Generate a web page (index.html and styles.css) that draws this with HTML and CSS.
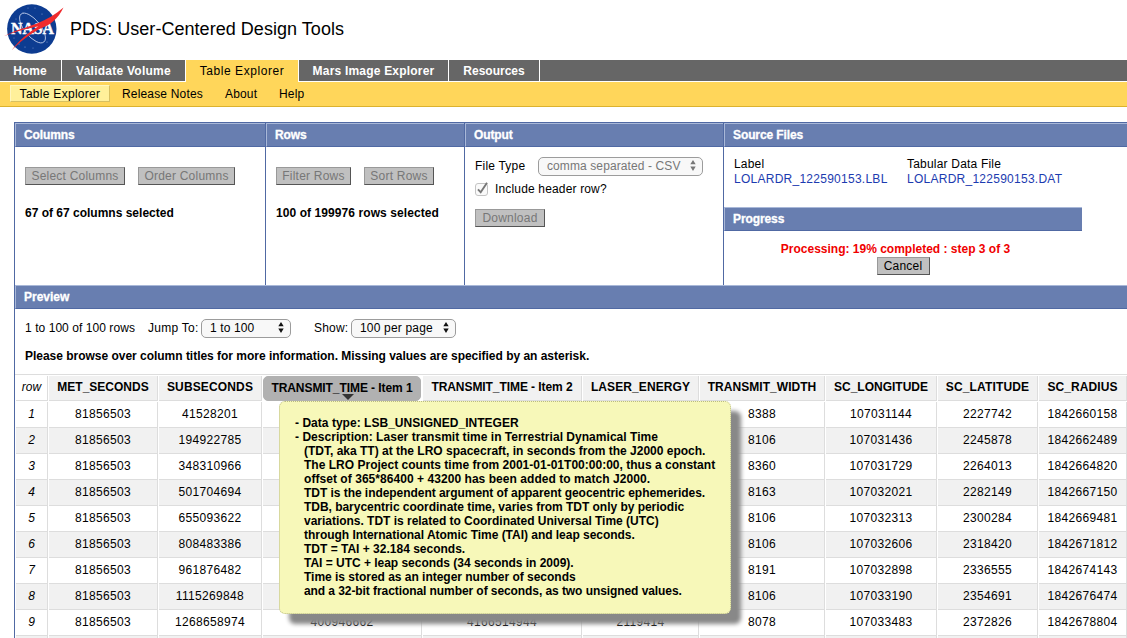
FILE: index.html
```html
<!DOCTYPE html>
<html lang="en">
<head>
<meta charset="utf-8">
<title>PDS: User-Centered Design Tools</title>
<link rel="stylesheet" href="styles.css">
</head>
<body>
<header class="masthead">
  <svg class="logo" width="70" height="60" viewBox="0 0 70 60">
    <circle cx="31.8" cy="29" r="24.7" fill="#0d3c91"/>
    <g fill="#7f9bd0"><circle cx="23" cy="13" r=".6"/><circle cx="35" cy="8" r=".5"/><circle cx="42" cy="14" r=".6"/><circle cx="16" cy="19" r=".5"/><circle cx="19" cy="44" r=".6"/><circle cx="25" cy="47" r=".6"/><circle cx="33" cy="48" r=".5"/><circle cx="47" cy="42" r=".6"/><circle cx="14" cy="38" r=".5"/><circle cx="28" cy="8" r=".5"/></g>
    <ellipse cx="32.5" cy="28" rx="18" ry="8" transform="rotate(51 32.5 28)" fill="none" stroke="#c9d5ef" stroke-width=".8"/>
    <text class="logo-text" x="11" y="34" textLength="43" lengthAdjust="spacingAndGlyphs">NASA</text>
    <path d="M63.500 7.500C58 19 50 25 41.500 28C29 34.500 20 42 11.500 50.500C19 40 29 32 38.500 26.200C27 28.500 14 32 4 36.300C13 31 25 28 37 23.500C47 19.500 55 14.500 63.500 7.500Z" fill="#ef2b2d"/>
  </svg>
  <h1 class="title">PDS: User-Centered Design Tools</h1>
</header>
<nav class="tabs">
  <a class="tab tab-home">Home</a>
  <a class="tab tab-validate">Validate Volume</a>
  <a class="tab tab-active">Table Explorer</a>
  <a class="tab tab-mars">Mars Image Explorer</a>
  <a class="tab tab-resources">Resources</a>
</nav>
<nav class="subnav">
  <a class="sub sub-active">Table Explorer</a>
  <a class="sub sub-notes">Release Notes</a>
  <a class="sub sub-about">About</a>
  <a class="sub">Help</a>
</nav>
<main class="workspace">
  <div class="panels">
    <section class="panel">
      <h2 class="bar">Columns</h2>
      <div class="actions"><button class="btn w100" disabled>Select Columns</button><button class="btn w97" disabled>Order Columns</button></div>
      <p class="status status-cols">67 of 67 columns selected</p>
    </section>
    <section class="panel">
      <h2 class="bar">Rows</h2>
      <div class="actions"><button class="btn w75" disabled>Filter Rows</button><button class="btn w70" disabled>Sort Rows</button></div>
      <p class="status status-rows">100 of 199976 rows selected</p>
    </section>
    <section class="panel">
      <h2 class="bar">Output</h2>
      <div class="filetype"><span class="ft-label">File Type</span>
        <span class="select select-off"><span class="csv">comma separated - CSV</span><svg width="6" height="11" viewBox="0 0 6 11"><path d="M3 0L5.700 4.300H.3ZM3 11L.3 6.500H5.700Z" fill="#777"/></svg></span></div>
      <div class="include">
        <svg width="14" height="14" viewBox="0 0 14 14"><rect x=".5" y="1.500" width="12" height="12" rx="2.500" fill="#fafafa" stroke="#c4c4c4"/><path d="M3 7.300L5.700 10.300L12 .8" fill="none" stroke="#777" stroke-width="1.900"/></svg>
        <span>Include header row?</span></div>
      <button class="btn btn-download" disabled>Download</button>
    </section>
    <section class="panel">
      <h2 class="bar bar-src">Source Files</h2>
      <div class="files">
        <div class="file"><span>Label</span><a class="link">LOLARDR_122590153.LBL</a></div>
        <div class="file"><span class="tdf">Tabular Data File</span><a class="link">LOLARDR_122590153.DAT</a></div>
      </div>
      <div class="progress">
        <h2 class="bar bar-progress">Progress</h2>
        <p class="processing">Processing: 19% completed : step 3 of 3</p>
        <button class="btn btn-cancel">Cancel</button>
      </div>
    </section>
  </div>
  <h2 class="bar bar-preview">Preview</h2>
  <div class="pager">
    <span class="pg-count">1 to 100 of 100 rows</span>
    <span class="pg-jump">Jump To:</span>
    <span class="select select-jump"><span>1 to 100</span><svg width="6" height="11" viewBox="0 0 6 11"><path d="M3 0L5.700 4.300H.3ZM3 11L.3 6.500H5.700Z" fill="#111"/></svg></span>
    <span class="pg-show">Show:</span>
    <span class="select select-show"><span>100 per page</span><svg width="6" height="11" viewBox="0 0 6 11"><path d="M3 0L5.700 4.300H.3ZM3 11L.3 6.500H5.700Z" fill="#111"/></svg></span>
  </div>
  <p class="hint">Please browse over column titles for more information. Missing values are specified by an asterisk.</p>
  <div class="grid">
    <div class="row head"><i class="first">row</i><b class="h-met">MET_SECONDS</b><b class="h-sub">SUBSECONDS</b>
      <b class="hovered h-t1"><span>TRANSMIT_TIME - Item 1</span><svg class="caret" width="12" height="6" viewBox="0 0 12 6"><path d="M0 0H12L6 6Z" fill="#333"/></svg>
      </b><b class="h-t2">TRANSMIT_TIME - Item 2</b><b class="h-las">LASER_ENERGY</b><b class="h-wid">TRANSMIT_WIDTH</b><b class="h-lon">SC_LONGITUDE</b><b class="h-lat">SC_LATITUDE</b><b class="h-rad">SC_RADIUS</b></div>
    <div class="row"><i>1</i><span>81856503</span><span>41528201</span><span></span><span></span><span></span><span>8388</span><span>107031144</span><span>2227742</span><span>1842660158</span></div>
    <div class="row alt"><i>2</i><span>81856503</span><span>194922785</span><span></span><span></span><span></span><span>8106</span><span>107031436</span><span>2245878</span><span>1842662489</span></div>
    <div class="row"><i>3</i><span>81856503</span><span>348310966</span><span></span><span></span><span></span><span>8360</span><span>107031729</span><span>2264013</span><span>1842664820</span></div>
    <div class="row alt"><i>4</i><span>81856503</span><span>501704694</span><span></span><span></span><span></span><span>8163</span><span>107032021</span><span>2282149</span><span>1842667150</span></div>
    <div class="row"><i>5</i><span>81856503</span><span>655093622</span><span></span><span></span><span></span><span>8106</span><span>107032313</span><span>2300284</span><span>1842669481</span></div>
    <div class="row alt"><i>6</i><span>81856503</span><span>808483386</span><span></span><span></span><span></span><span>8106</span><span>107032606</span><span>2318420</span><span>1842671812</span></div>
    <div class="row"><i>7</i><span>81856503</span><span>961876482</span><span></span><span></span><span></span><span>8191</span><span>107032898</span><span>2336555</span><span>1842674143</span></div>
    <div class="row alt"><i>8</i><span>81856503</span><span>1115269848</span><span></span><span></span><span></span><span>8106</span><span>107033190</span><span>2354691</span><span>1842676474</span></div>
    <div class="row"><i>9</i><span>81856503</span><span>1268658974</span><span>400946662</span><span>4166514944</span><span>2119414</span><span>8078</span><span>107033483</span><span>2372826</span><span>1842678804</span></div>
    <div class="row alt"><i></i><span></span><span></span><span></span><span></span><span></span><span></span><span></span><span></span><span></span></div>
  </div>
</main>
<div class="tooltip">
  <div class="tl out s1">- Data type: LSB_UNSIGNED_INTEGER</div>
  <div class="tl out s2">- Description: Laser transmit time in Terrestrial Dynamical Time</div>
  <div class="tl">(TDT, aka TT) at the LRO spacecraft, in seconds from the J2000 epoch.</div>
  <div class="tl s4">The LRO Project counts time from 2001-01-01T00:00:00, thus a constant</div>
  <div class="tl s5">offset of 365*86400 + 43200 has been added to match J2000.</div>
  <div class="tl s6">TDT is the independent argument of apparent geocentric ephemerides.</div>
  <div class="tl s7">TDB, barycentric coordinate time, varies from TDT only by periodic</div>
  <div class="tl s8">variations. TDT is related to Coordinated Universal Time (UTC)</div>
  <div class="tl s9">through International Atomic Time (TAI) and leap seconds.</div>
  <div class="tl">TDT = TAI + 32.184 seconds.</div>
  <div class="tl s11">TAI = UTC + leap seconds (34 seconds in 2009).</div>
  <div class="tl s12">Time is stored as an integer number of seconds</div>
  <div class="tl s13">and a 32-bit fractional number of seconds, as two unsigned values.</div>
</div>
</body>
</html>
```
FILE: styles.css
```css
* { box-sizing: border-box; }
body { margin: 0; width: 1127px; height: 638px; overflow: hidden; position: relative; background: #fff; color: #000; font: 12px/14px "Liberation Sans", Arial, sans-serif; }
h1, h2, p { margin: 0; }
.masthead { display: flex; height: 60px; }
.logo { flex: none; }
.logo-text { font: bold 16.5px "Liberation Serif", serif; fill: #fff; stroke: #fff; stroke-width: .4px; }
.title { font-size: 18px; font-weight: normal; line-height: 58px; white-space: nowrap; letter-spacing: .04px; }

.tabs { display: flex; height: 22px; background: #666; border-bottom: 1px solid #fff; }
.tab { height: 21px; line-height: 22px; text-align: center; color: #fff; font-weight: bold; border-right: 1px solid #fff; white-space: nowrap; }
.tab-home { width: 62px; padding-right: 1px; }
.tab-validate { width: 124px; letter-spacing: .25px; }
.tab-active { width: 113px; height: 22px; background: #ffd65a; color: #000; font-weight: normal; letter-spacing: .57px; border-right-color: #fff; }
.tab-mars { width: 150px; letter-spacing: .2px; }
.tab-resources { width: 91px; }
.subnav { display: flex; align-items: flex-start; height: 25px; padding: 3px 0 0 10px; background: #ffd65a; border-bottom: 1px solid #dcb22e; white-space: nowrap; letter-spacing: .17px; }
.sub { line-height: 19px; }
.sub-active { width: 100px; height: 17px; line-height: 16px; text-align: center; background: #fff09a; border: 1px solid #fff6c0; border-right-color: #d8c060; border-bottom-color: #d8c060; margin-right: 12px; letter-spacing: .29px; }
.sub-notes { width: 103px; }
.sub-about { width: 54px; }

.workspace { margin: 15px 0 0 14px; border: 1px solid #5069a3; border-right: 0; border-bottom: 0; }
.panels { display: grid; grid-template-columns: 250px 199px 259px 1fr; height: 162px; }
.panel + .panel { border-left: 1px solid #5069a3; }
.bar { height: 24px; line-height: 22px; padding-left: 8px; background: #687eb0; color: #fff; font-size: 12px; border-top: 1px solid #a9b8d8; border-left: 1px solid #a9b8d8; border-bottom: 1px solid #5069a3; -webkit-text-stroke: .3px #fff; }
.panels .bar { letter-spacing: -.1px; }
.btn { height: 18px; padding: 0; background: #c0c0c0; border: 1px solid; border-color: #999 #555 #555 #999; color: #777; font: 12px/15px "Liberation Sans", Arial, sans-serif; letter-spacing: .22px; white-space: nowrap; }
.actions { display: flex; gap: 13px; padding: 20px 0 0 10px; }
.w100 { width: 100px; } .w97 { width: 97px; } .w75 { width: 75px; } .w70 { width: 70px; }
.status { padding: 21px 0 0 10px; font-weight: bold; white-space: nowrap; }
.status-rows { letter-spacing: .08px; }
.filetype { display: flex; align-items: center; height: 20px; margin: 9px 0 0 10px; white-space: nowrap; letter-spacing: .2px; }
.ft-label { width: 63px; }
.select { display: flex; align-items: center; justify-content: space-between; height: 19px; padding: 0 6px 1px 8px; border: 1px solid #9c9c9c; border-radius: 5px; background: #f8f8f8; white-space: nowrap; }
.select-off { width: 165px; color: #777; letter-spacing: .1px; }
.include { display: flex; align-items: center; gap: 6px; height: 16px; margin: 5px 0 0 10px; letter-spacing: .16px; }
.btn-download { width: 70px; margin: 12px 0 0 10px; display: block; }
.files { display: flex; gap: 20px; height: 60px; padding: 10px 0 0 10px; white-space: nowrap; letter-spacing: .2px; }
.file { width: 153px; display: flex; flex-direction: column; line-height: 15px; }
.link { color: #1c3bb0; letter-spacing: .26px; }
.progress { width: 358px; display: flex; flex-direction: column; align-items: center; }
.bar-progress { width: 358px; }
.processing { margin: 11px 0 1px; padding-right: 15px; color: #f00000; font-weight: bold; white-space: nowrap; }
.btn-cancel { width: 53px; color: #000; }

.pager { display: flex; align-items: center; height: 19px; margin: 9.5px 0 0 10px; white-space: nowrap; letter-spacing: .06px; }
.pg-count { width: 123px; }
.pg-jump { width: 53px; letter-spacing: .25px; }
.select-jump { width: 90px; letter-spacing: .12px; }
.pg-show { width: 37px; margin-left: 23px; letter-spacing: .2px; }
.select-show { width: 105px; letter-spacing: .18px; }
.hint { padding: 11.5px 0 0 10px; height: 36px; font-weight: bold; white-space: nowrap; letter-spacing: -.02px; }

.grid { border-top: 1px solid #ddd; }
.row { display: grid; grid-template-columns: 33px 110px 104px 160px 160px 117px 126px 112px 101px 89px; height: 26px; }
.row > * { margin: 1px 0 0 1px; border-right: 1px solid #ddd; border-bottom: 1px solid #ddd; text-align: center; line-height: 25px; white-space: nowrap; letter-spacing: .33px; }
.row > i { letter-spacing: 0; }
.alt > * { background: #f1f1f1; }
.head > * { line-height: 23px; }
.head > b { background: #f1f1f1; }
.head > .h-met, .head > .h-lon { letter-spacing: 0; }
.head > .h-sub, .head > .h-lat { letter-spacing: .14px; }
.head > .h-t1, .head > .h-t2 { letter-spacing: -.07px; }
.head > .h-las, .head > .h-rad { letter-spacing: .09px; }
.head > .h-wid { letter-spacing: .05px; }
.head > .hovered { background: #b1b1b1; border: 1px solid #b1b1b1; border-radius: 5px; position: relative; line-height: 22px; margin-right: 1px; }
.caret { position: absolute; left: 78px; top: 17px; }

.tooltip { position: absolute; left: 279px; top: 401px; width: 452px; height: 213px; padding: 14px 0 0 24px; background: #f7f8b9; border: 1px dotted #b9ba85; border-radius: 6px; box-shadow: 10px 10px 4px #888; font-weight: bold; }
.tl { white-space: nowrap; height: 14px; }
.out { margin-left: -9px; }
.s1, .s2 { letter-spacing: .03px; }
.s4 { letter-spacing: .015px; }
.s5 { letter-spacing: .05px; }
.s6 { letter-spacing: -.045px; }
.s7, .s9 { letter-spacing: -.03px; }
.s8, .s11, .s12 { letter-spacing: -.02px; }
.s13 { letter-spacing: -.075px; }
```
